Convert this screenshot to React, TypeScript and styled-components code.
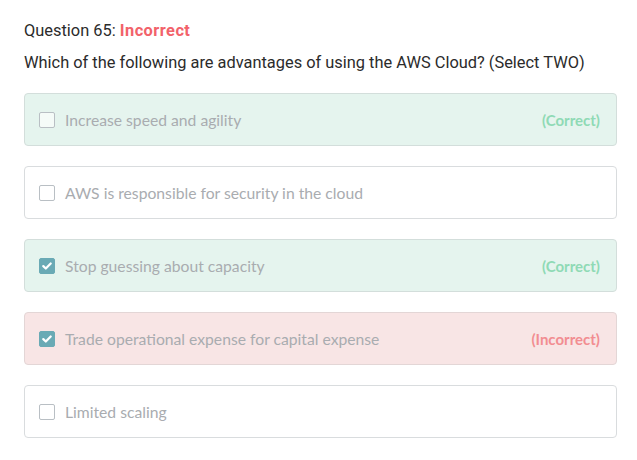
import styled, { createGlobalStyle, css } from 'styled-components';

const GlobalStyle = createGlobalStyle`
  body {
    margin: 0;
    background: #ffffff;
  }
`;

type Status = 'correct' | 'incorrect' | 'none';

const Page = styled.div`
  padding: 20px 20px 20px 24px;
  font-family: Roboto, 'Liberation Sans', sans-serif;
`;

const Heading = styled.div`
  font-size: 16.4px;
  color: #2b2b2b;
  line-height: 22px;
`;

const Verdict = styled.span`
  color: #f2626a;
  font-weight: 700;
  letter-spacing: 0.45px;
`;

const Prompt = styled.div`
  margin-top: 10px;
  font-size: 16.4px;
  color: #2b2b2b;
  line-height: 22px;
`;

const Options = styled.div`
  margin-top: 19px;
  display: flex;
  flex-direction: column;
  gap: 20px;
  width: 593px;
`;

const Option = styled.div<{ $status: Status }>`
  box-sizing: border-box;
  height: 53px;
  display: flex;
  align-items: center;
  padding: 0 16px 0 14px;
  border-radius: 4px;
  border: 1px solid #d9dcde;
  background: #ffffff;
  font-family: Lato, 'Open Sans', sans-serif;
  ${({ $status }) =>
    $status === 'correct' &&
    css`
      background: #e5f4ee;
      border-color: #d3dedb;
    `}
  ${({ $status }) =>
    $status === 'incorrect' &&
    css`
      background: #f8e5e5;
      border-color: #e3d6d6;
    `}
`;

const Box = styled.span<{ $checked: boolean }>`
  box-sizing: border-box;
  width: 16px;
  height: 16px;
  border-radius: 2px;
  flex: none;
  display: flex;
  align-items: center;
  justify-content: center;
  border: 1px solid ${({ $checked }) => ($checked ? '#6aaab5' : '#b9bfc4')};
  background: ${({ $checked }) => ($checked ? '#6aaab5' : 'rgba(255,255,255,0.6)')};
`;

const Label = styled.span`
  margin-left: 10px;
  font-size: 15.7px;
  color: #a9acb0;
  flex: 1;
`;

const Tag = styled.span<{ $status: Status }>`
  font-size: 15px;
  font-weight: 700;
  color: ${({ $status }) => ($status === 'correct' ? '#8fdab5' : '#f28d91')};
`;

const options: { text: string; checked: boolean; status: Status }[] = [
  { text: 'Increase speed and agility', checked: false, status: 'correct' },
  { text: 'AWS is responsible for security in the cloud', checked: false, status: 'none' },
  { text: 'Stop guessing about capacity', checked: true, status: 'correct' },
  { text: 'Trade operational expense for capital expense', checked: true, status: 'incorrect' },
  { text: 'Limited scaling', checked: false, status: 'none' },
];

export default function App() {
  return (
    <Page>
      <GlobalStyle />
      <Heading>
        Question 65: <Verdict>Incorrect</Verdict>
      </Heading>
      <Prompt>Which of the following are advantages of using the AWS Cloud? (Select TWO)</Prompt>
      <Options>
        {options.map((o) => (
          <Option key={o.text} $status={o.status}>
            <Box $checked={o.checked}>
              {o.checked && (
                <svg width="10" height="8" viewBox="0 0 10 8">
                  <path d="M1.3 4.1 L3.8 6.5 L8.7 1.5" fill="none" stroke="#fff" strokeWidth="2.2" strokeLinecap="round" strokeLinejoin="round" />
                </svg>
              )}
            </Box>
            <Label>{o.text}</Label>
            {o.status !== 'none' && (
              <Tag $status={o.status}>{o.status === 'correct' ? '(Correct)' : '(Incorrect)'}</Tag>
            )}
          </Option>
        ))}
      </Options>
    </Page>
  );
}
